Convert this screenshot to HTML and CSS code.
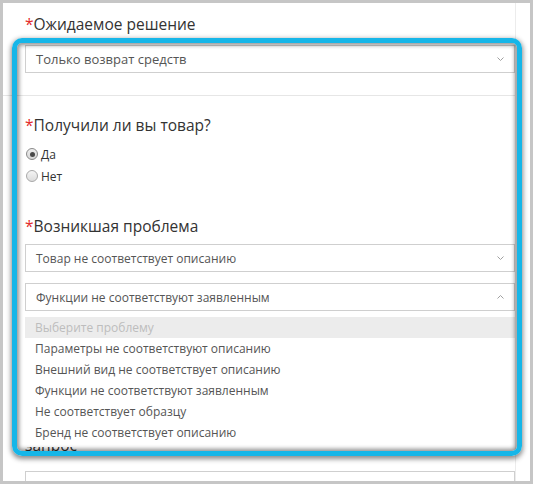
FILE: index.html
```html
<!DOCTYPE html>
<html lang="ru">
<head>
<meta charset="utf-8">
<title>Форма</title>
<link rel="stylesheet" href="styles.css">
</head>
<body>
<div class="screen">
  <div class="page">
    <div class="label first"><span class="req">*</span>Ожидаемое решение</div>
    <div class="select s1">
      <span class="value">Только возврат средств</span>
      <svg class="chev" width="7" height="4" viewBox="0 0 7 4"><path d="M0.5 0.5 L3.5 3.5 L6.5 0.5" fill="none" stroke="#a0a0a0" stroke-width="1"/></svg>
    </div>
    <div class="sep"></div>
    <div class="label l2"><span class="req">*</span>Получили ли вы товар?</div>
    <div class="radios">
      <div class="radio"><span class="dot checked"></span>Да</div>
      <div class="radio"><span class="dot"></span>Нет</div>
    </div>
    <div class="label l3"><span class="req">*</span>Возникшая проблема</div>
    <div class="select s2">
      <span class="value">Товар не соответствует описанию</span>
      <svg class="chev" width="7" height="4" viewBox="0 0 7 4"><path d="M0.5 0.5 L3.5 3.5 L6.5 0.5" fill="none" stroke="#a0a0a0" stroke-width="1"/></svg>
    </div>
    <div class="select-wrap">
      <div class="select s3">
        <span class="value">Функции не соответствуют заявленным</span>
        <svg class="chev" width="7" height="4" viewBox="0 0 7 4"><path d="M0.5 3.5 L3.5 0.5 L6.5 3.5" fill="none" stroke="#a0a0a0" stroke-width="1"/></svg>
      </div>
      <ul class="menu">
        <li class="placeholder">Выберите проблему</li>
        <li>Параметры не соответствуют описанию</li>
        <li>Внешний вид не соответствует описанию</li>
        <li>Функции не соответствуют заявленным</li>
        <li>Не соответствует образцу</li>
        <li>Бренд не соответствует описанию</li>
      </ul>
    </div>
    <div class="label l4">запрос</div>
    <div class="input"></div>
  </div>
  <div class="highlight"></div>
</div>
</body>
</html>
```
FILE: styles.css
```css
html, body {
  margin: 0;
  padding: 0;
  background: #ffffff;
}
.screen {
  position: relative;
  width: 533px;
  height: 484px;
  box-sizing: border-box;
  border: 3px solid #c6c6c6;
  background: #ffffff;
  overflow: hidden;
  font-family: "Open Sans", "Liberation Sans", sans-serif;
}
.page {
  width: 513px;
  height: 100%;
  box-sizing: border-box;
  border-right: 1px solid #ececec;
  padding: 10px 0 0 22px;
}
.label {
  font-size: 15.5px;
  line-height: 22px;
  color: #333333;
  white-space: nowrap;
}
.req {
  color: #e32b2b;
}
.select {
  width: 490px;
  height: 28px;
  box-sizing: border-box;
  border: 1px solid #cfcfcf;
  background: #ffffff;
  display: flex;
  align-items: center;
  justify-content: space-between;
  padding: 0 10px 0 10px;
  font-size: 12px;
  color: #555555;
}
.s1 {
  margin-top: 10px;
  font-size: 13px;
}
.chev { display: block; }
.sep {
  height: 0;
  border-top: 1px solid #e6e6e6;
  margin: 22px 0 0 -22px;
}
.l2 { margin-top: 18px; }
.radios {
  margin-top: 7px;
  display: flex;
  flex-direction: column;
}
.radio {
  height: 22px;
  display: flex;
  align-items: center;
  gap: 3px;
  font-size: 12px;
  color: #333333;
}
.dot {
  width: 12px;
  height: 12px;
  box-sizing: border-box;
  border-radius: 50%;
  border: 1px solid #a8a8a8;
  background: linear-gradient(#f4f4f4, #dcdcdc);
  display: flex;
  align-items: center;
  justify-content: center;
  margin-left: 1px;
}
.dot.checked {
  border-color: #8a8a8a;
  background: linear-gradient(#eeeeee, #d6d6d6);
}
.dot.checked::after {
  content: "";
  width: 5px;
  height: 5px;
  border-radius: 50%;
  background: #4a4a4a;
}
.l3 { margin-top: 28px; }
.s2 { margin-top: 7px; }
.select-wrap {
  position: relative;
  margin-top: 11px;
  width: 490px;
}
.menu {
  position: absolute;
  left: 0;
  top: 100%;
  width: 490px;
  margin: 0;
  padding: 6px 0 4px;
  list-style: none;
  background: #ffffff;
  z-index: 2;
}
.menu li {
  height: 21px;
  line-height: 21px;
  padding-left: 10px;
  font-size: 12px;
  color: #555555;
  white-space: nowrap;
}
.menu li.placeholder {
  background: #ececec;
  color: #bdbdbd;
}
.l4 { margin-top: 123px; }
.input {
  margin-top: 15px;
  width: 490px;
  height: 32px;
  box-sizing: border-box;
  border: 1px solid #cfcfcf;
}
.highlight {
  position: absolute;
  left: 9px;
  top: 35px;
  width: 510px;
  height: 418px;
  box-sizing: border-box;
  border: 5px solid #16b6e8;
  border-radius: 10px;
  box-shadow: 0 2px 5px 1px rgba(0,0,0,0.45), inset 0 0 4px 2px rgba(0,0,0,0.45);
  z-index: 3;
  pointer-events: none;
}
```
